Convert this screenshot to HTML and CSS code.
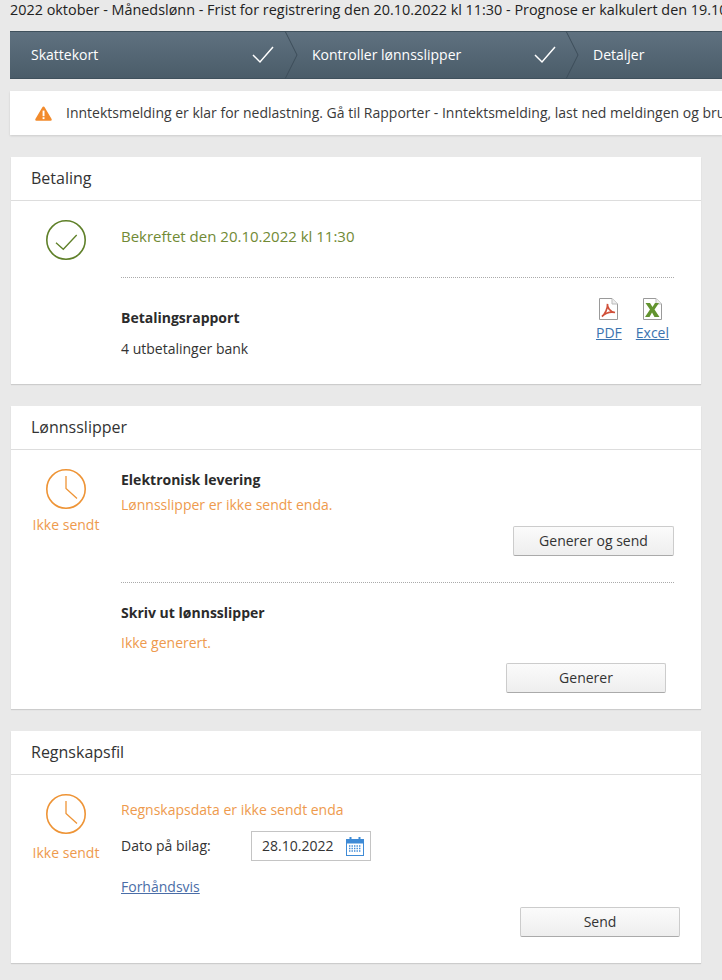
FILE: index.html
```html
<!DOCTYPE html>
<html>
<head>
    <title>Lønnskjøring</title>
    <link rel="stylesheet" href="styles.css">
</head>
<body>
    <div class="page-title">2022 oktober - Månedslønn - Frist for registrering den 20.10.2022 kl 11:30 - Prognose er kalkulert den 19.10.2022</div>

    <div class="stepper">
        <div class="step step-first">
            <span>Skattekort</span>
            <svg width="22" height="18" viewBox="0 0 22 18"><path d="M1 9 L8 16 L21 1" fill="none" stroke="#fff" stroke-width="1.5"/></svg>
            <svg class="step-arrow" width="16" height="48" viewBox="0 0 16 48"><path d="M1 0 L13 24 L1 48" fill="none" stroke="#3c4d5a" stroke-width="1"/></svg>
        </div>
        <div class="step">
            <span>Kontroller lønnsslipper</span>
            <svg width="22" height="18" viewBox="0 0 22 18"><path d="M1 9 L8 16 L21 1" fill="none" stroke="#fff" stroke-width="1.5"/></svg>
            <svg class="step-arrow" width="16" height="48" viewBox="0 0 16 48"><path d="M1 0 L13 24 L1 48" fill="none" stroke="#3c4d5a" stroke-width="1"/></svg>
        </div>
        <div class="step step-last">
            <span>Detaljer</span>
        </div>
    </div>

    <div class="alert">
        <svg width="17" height="15" viewBox="0 0 17 15"><path d="M8.5 0.5 Q9.3 0.5 9.8 1.4 L16.6 13 Q17.2 14.5 15.6 14.7 L1.4 14.7 Q-0.2 14.5 0.4 13 L7.2 1.4 Q7.7 0.5 8.5 0.5 Z" fill="#f28b2c"/><rect x="7.6" y="4.6" width="1.9" height="5.6" fill="#fff"/><rect x="7.6" y="11.2" width="1.9" height="1.9" fill="#fff"/></svg>
        <span>Inntektsmelding er klar for nedlastning. Gå til Rapporter - Inntektsmelding, last ned meldingen og bruk den i Altinn</span>
    </div>

    <div class="card">
        <div class="card-header">Betaling</div>
        <div class="card-body">
            <div class="status">
                <svg width="40" height="40" viewBox="0 0 40 40"><circle cx="20" cy="20" r="19.2" fill="none" stroke="#5f8029" stroke-width="1.6"/><path d="M10 22.7 L17.3 29.3 L30.7 15" fill="none" stroke="#5f8029" stroke-width="1.3"/></svg>
            </div>
            <div class="content">
                <div class="confirmed">Bekreftet den 20.10.2022 kl 11:30</div>
                <div class="divider"></div>
                <div class="report">
                    <div>
                        <h4>Betalingsrapport</h4>
                        <div class="report-count">4 utbetalinger bank</div>
                    </div>
                    <div class="downloads">
                        <a class="download" href="#">
                            <svg width="19" height="22" viewBox="0 0 19 22"><path d="M0.5 0.5 H13 L18.5 6 V21.5 H0.5 Z" fill="#fff" stroke="#9a9a9a"/><path d="M13 0.5 V6 H18.5" fill="#eee" stroke="#bbb"/><path d="M3 18.5 C6 16 9 10 8.5 6 C8 9 11 14 16 14.5 C11 13.5 6.5 15 3 18.5 Z" fill="none" stroke="#d0503a" stroke-width="1.7"/></svg>
                            PDF
                        </a>
                        <a class="download" href="#">
                            <svg width="19" height="22" viewBox="0 0 19 22"><path d="M0.5 0.5 H13 L18.5 6 V21.5 H0.5 Z" fill="#fff" stroke="#9a9a9a"/><path d="M13 0.5 V6 H18.5" fill="#eee" stroke="#bbb"/><path d="M2.5 5 H7 L9.5 9 L12 5 H16 L11.5 11.5 L16.5 19 H11.5 L9 14.5 L6.5 19 H2 L7 11.5 Z" fill="#62932f"/></svg>
                            Excel
                        </a>
                    </div>
                </div>
            </div>
        </div>
    </div>

    <div class="card">
        <div class="card-header">Lønnsslipper</div>
        <div class="card-body">
            <div class="status">
                <svg width="40" height="40" viewBox="0 0 40 40"><circle cx="20" cy="20" r="19.2" fill="none" stroke="#ee9436" stroke-width="1.6"/><path d="M20 7 V19.5 L31 29.5" fill="none" stroke="#ee9436" stroke-width="1.3"/></svg>
                <div class="status-text">Ikke sendt</div>
            </div>
            <div class="content">
                <h4 class="delivery-title">Elektronisk levering</h4>
                <div class="warn delivery-text">Lønnsslipper er ikke sendt enda.</div>
                <div class="actions actions-send"><button class="btn btn-send">Generer og send</button></div>
                <div class="divider divider-slips"></div>
                <h4 class="print-title">Skriv ut lønnsslipper</h4>
                <div class="warn print-text">Ikke generert.</div>
                <div class="actions actions-generate"><button class="btn btn-generate">Generer</button></div>
            </div>
        </div>
    </div>

    <div class="card">
        <div class="card-header">Regnskapsfil</div>
        <div class="card-body">
            <div class="status">
                <svg width="40" height="40" viewBox="0 0 40 40"><circle cx="20" cy="20" r="19.2" fill="none" stroke="#ee9436" stroke-width="1.6"/><path d="M20 7 V19.5 L31 29.5" fill="none" stroke="#ee9436" stroke-width="1.3"/></svg>
                <div class="status-text status-text-low">Ikke sendt</div>
            </div>
            <div class="content">
                <div class="warn accounting-text">Regnskapsdata er ikke sendt enda</div>
                <div class="date-row">
                    <label>Dato på bilag:</label>
                    <div class="date-input">
                        <span>28.10.2022</span>
                        <svg width="18" height="19" viewBox="0 0 18 19"><rect x="0.5" y="2.5" width="17" height="16" fill="#fff" stroke="#3f8bd6"/><rect x="0.5" y="2.5" width="17" height="4" fill="#3f8bd6"/><rect x="3.5" y="0" width="2" height="4.5" fill="#3f8bd6"/><rect x="12.5" y="0" width="2" height="4.5" fill="#3f8bd6"/><path d="M3 9 H15 M3 11.5 H15 M3 14 H15" stroke="#3f8bd6" stroke-width="1.4" stroke-dasharray="1.4 1.1" fill="none"/></svg>
                    </div>
                </div>
                <a class="preview" href="#">Forhåndsvis</a>
                <div class="actions actions-accounting"><button class="btn btn-accounting">Send</button></div>
            </div>
        </div>
    </div>
</body>
</html>
```

FILE: styles.css
```css
html, body {
    overflow: hidden;
}
body {
    margin: 0;
    height: 980px;
    background-color: #e9e9e9;
    font-family: "Open Sans", Arial, sans-serif;
    font-size: 14px;
    line-height: 20px;
    color: #333;
}
h4 {
    margin: 0;
    font-size: 14px;
    font-weight: 700;
    color: #2b2b2b;
}
a {
    color: #3b73af;
}
.page-title {
    height: 31px;
    padding: 0 0 0 10px;
    white-space: nowrap;
    font-size: 14.4px;
    color: #222;
}
.stepper {
    display: flex;
    height: 48px;
    margin-left: 10px;
    background: linear-gradient(#5f7180, #4a5c69);
    border-top: 1px solid #3f505c;
    border-bottom: 1px solid #3f505c;
    box-sizing: border-box;
    color: #fff;
}
.step {
    position: relative;
    display: flex;
    flex: none;
    align-items: center;
    justify-content: space-between;
    box-sizing: border-box;
    width: 281px;
    padding: 0 10px 0 27px;
}
.step-first {
    width: 275px;
    padding: 0 11px 0 21px;
}
.step-last {
    width: 150px;
}
.step-arrow {
    position: absolute;
    top: -1px;
    right: -15px;
}
.alert {
    display: flex;
    align-items: center;
    gap: 14px;
    height: 44px;
    margin: 12px 0 22px 10px;
    padding-left: 25px;
    background-color: #fff;
    box-shadow: 0 1px 2px rgba(0, 0, 0, 0.12);
    white-space: nowrap;
    color: #3a3a3a;
}
.alert svg {
    flex: none;
}
.card {
    width: 690px;
    margin: 0 0 22px 11px;
    background-color: #fff;
    box-shadow: 0 1px 1px rgba(0, 0, 0, 0.12);
}
.card-header {
    height: 43px;
    padding-left: 20px;
    border-bottom: 1px solid #ddd;
    font-size: 16px;
    line-height: 43px;
    color: #333;
}
.card-body {
    display: flex;
}
.status {
    flex: none;
    width: 110px;
    padding-top: 19px;
    text-align: center;
    color: #ee9a4d;
}
.status svg {
    display: block;
    margin: 0 auto;
}
.status-text {
    margin-top: 6px;
}
.status-text-low {
    margin-top: 9px;
}
.content {
    flex: none;
    width: 553px;
}
.confirmed {
    margin-top: 25px;
    font-size: 15px;
    color: #718a35;
}
.divider {
    height: 0;
    margin-top: 30px;
    border-top: 1px dotted #aaa;
}
.confirmed + .divider {
    margin-top: 31px;
}
.report {
    display: flex;
    justify-content: space-between;
    height: 106px;
}
.report h4 {
    margin-top: 30px;
}
.report-count {
    margin-top: 11px;
}
.downloads {
    display: flex;
    gap: 14px;
    margin: 20px 5px 0 0;
}
.download {
    display: flex;
    flex-direction: column;
    align-items: center;
    gap: 3px;
}
.warn {
    color: #ee9a4d;
}
.delivery-title {
    margin-top: 20px;
}
.delivery-text {
    margin-top: 5px;
}
.actions {
    display: flex;
    justify-content: flex-end;
}
.actions-send {
    margin-top: 11px;
}
.divider-slips {
    margin-top: 26px;
}
.print-title {
    margin-top: 20px;
}
.print-text {
    margin-top: 10px;
}
.actions-generate {
    margin-top: 10px;
    padding-right: 8px;
    padding-bottom: 16px;
}
.btn {
    box-sizing: border-box;
    height: 30px;
    padding: 0 0 2px;
    border: 1px solid #ccc;
    border-bottom-color: #aaa;
    border-radius: 2px;
    background: linear-gradient(#fbfbfb, #eee);
    font-family: inherit;
    font-size: 14px;
    color: #333;
}
.btn-send {
    width: 161px;
}
.btn-generate {
    width: 160px;
}
.btn-accounting {
    width: 160px;
}
.accounting-text {
    margin-top: 25px;
}
.date-row {
    display: flex;
    align-items: center;
    margin-top: 11px;
}
.date-row label {
    width: 130px;
}
.date-input {
    display: flex;
    align-items: center;
    justify-content: space-between;
    box-sizing: border-box;
    width: 120px;
    height: 30px;
    padding: 0 6px 0 10px;
    border: 1px solid #c4c4c4;
}
.preview {
    display: block;
    margin-top: 16px;
    color: #4a6da7;
}
.actions-accounting {
    margin: 10px -6px 26px 0;
}
```
